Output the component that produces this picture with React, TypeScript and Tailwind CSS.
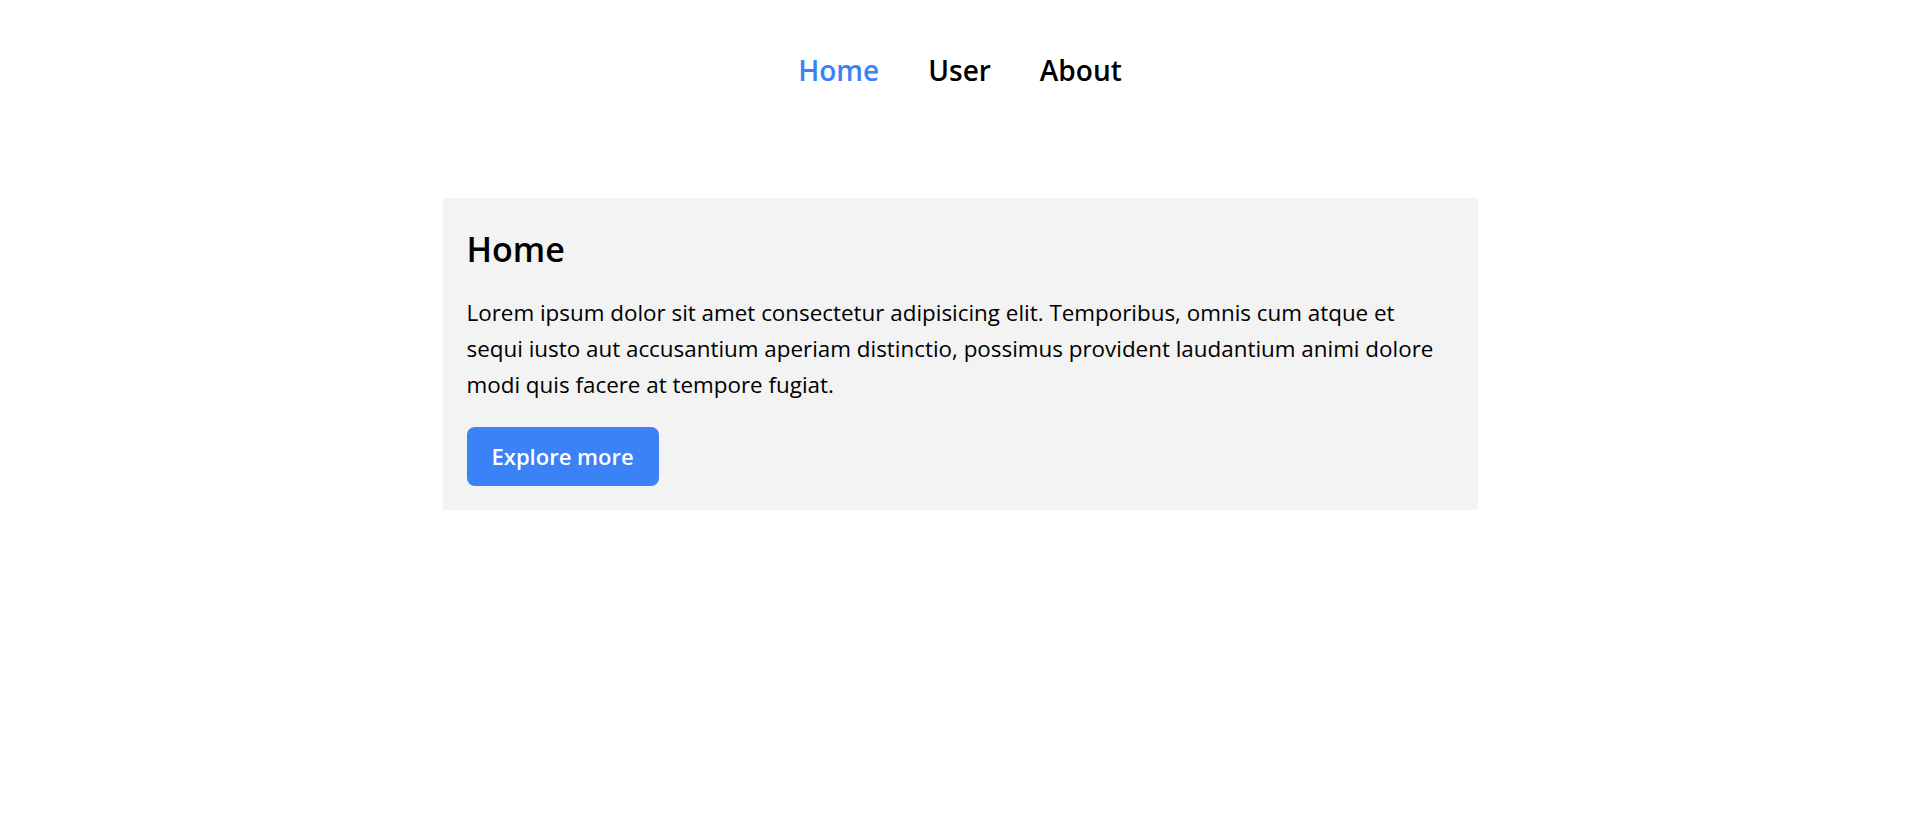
const App = () => {
  return (
    <div className="min-h-screen bg-white font-['Open_Sans',sans-serif] text-black">
      {/* Nav */}
      <nav className="flex justify-center gap-[49px] pt-[50px] text-[28px] font-semibold leading-[40px]">
        <a href="#" className="text-[#3b82f6]">
          Home
        </a>
        <a href="#">User</a>
        <a href="#">About</a>
      </nav>

      {/* Card */}
      <div className="mx-auto mt-[108px] w-[1035px] bg-[#f3f3f3] p-6">
        <h1 className="pt-[3px] text-[34px] font-semibold leading-[48px]">Home</h1>
        <p className="mt-[22px] max-w-[978px] text-[22.4px] leading-[36px]">
          Lorem ipsum dolor sit amet consectetur adipisicing elit. Temporibus,
          omnis cum atque et sequi iusto aut accusantium aperiam distinctio,
          possimus provident laudantium animi dolore modi quis facere at tempore
          fugiat.
        </p>
        <button className="mt-[24px] h-[59px] rounded-lg bg-[#3b82f6] px-[25px] text-[22px] font-semibold text-white">
          Explore more
        </button>
      </div>
    </div>
  );
};

export default App;
